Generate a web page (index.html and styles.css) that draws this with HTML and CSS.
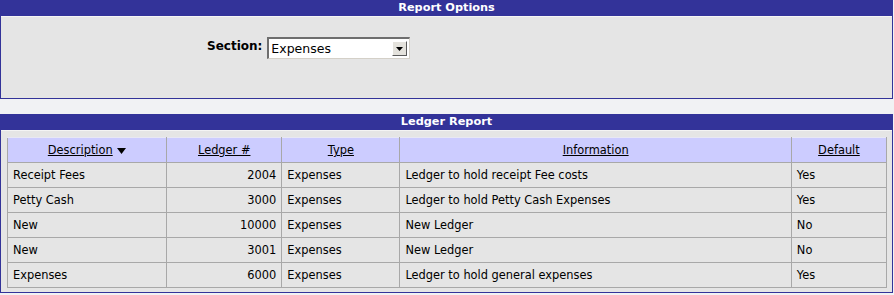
FILE: index.html
```html
<!DOCTYPE html>
<html>
<head>
<meta charset="utf-8">
<link rel="stylesheet" href="styles.css">
</head>
<body>
<div class="panel">
  <div class="panel-head">Report Options</div>
  <div class="panel-body options">
    <label class="field-label">Section:</label>
    <div class="select">
      <span class="select-value">Expenses</span>
      <span class="select-btn"><svg width="7" height="4" viewBox="0 0 7 4"><path d="M0 0H7L3.5 4Z" fill="#000"/></svg></span>
    </div>
  </div>
</div>
<div class="panel second">
  <div class="panel-head">Ledger Report</div>
  <div class="panel-body report">
    <table class="ledger">
      <thead>
        <tr>
          <th class="c-desc"><a href="#">Description</a> <svg class="sort" width="9" height="6" viewBox="0 0 9 6"><path d="M0 0H9L4.5 6Z" fill="#000"/></svg></th>
          <th class="c-num"><a href="#">Ledger #</a></th>
          <th class="c-type"><a href="#">Type</a></th>
          <th class="c-info"><a href="#">Information</a></th>
          <th class="c-def"><a href="#">Default</a></th>
        </tr>
      </thead>
      <tbody>
        <tr><td>Receipt Fees</td><td class="num">2004</td><td>Expenses</td><td>Ledger to hold receipt Fee costs</td><td>Yes</td></tr>
        <tr><td>Petty Cash</td><td class="num">3000</td><td>Expenses</td><td>Ledger to hold Petty Cash Expenses</td><td>Yes</td></tr>
        <tr><td>New</td><td class="num">10000</td><td>Expenses</td><td>New Ledger</td><td>No</td></tr>
        <tr><td>New</td><td class="num">3001</td><td>Expenses</td><td>New Ledger</td><td>No</td></tr>
        <tr><td>Expenses</td><td class="num">6000</td><td>Expenses</td><td>Ledger to hold general expenses</td><td>Yes</td></tr>
      </tbody>
    </table>
  </div>
</div>
</body>
</html>
```
FILE: styles.css
```css
html, body {
  margin: 0;
  padding: 0;
  background: #f1f2f4;
}
body {
  width: 894px;
  font-family: "DejaVu Sans", Verdana, sans-serif;
  font-size: 11.4px;
  color: #000;
}
.panel {
  width: 893px;
}
.second {
  margin-top: 15px;
}
.panel-head {
  background: #333399;
  color: #fff;
  font-weight: bold;
  text-align: center;
  height: 16px;
  line-height: 16px;
  font-size: 11.3px;
}
.panel-body {
  background: #e5e5e5;
  border: 1px solid #333399;
  border-top: none;
  box-shadow: inset 0 1px 0 #f4f4f4;
}
.options {
  box-sizing: border-box;
  height: 83px;
  display: flex;
  align-items: flex-start;
  padding: 21px 0 0 206px;
  gap: 5px;
}
.field-label {
  font-weight: bold;
  font-size: 12px;
  line-height: 18px;
  margin-top: 0;
}
.select {
  width: 143px;
  height: 22px;
  box-sizing: border-box;
  background: #fff;
  border-top: 2px solid #6e6e6e;
  border-left: 2px solid #6e6e6e;
  border-right: 1px solid #d4d0c8;
  border-bottom: 1px solid #d4d0c8;
  display: flex;
  align-items: center;
  justify-content: space-between;
}
.select-value {
  font-size: 12.5px;
  padding-left: 2px;
}
.select-btn {
  width: 15px;
  height: 15px;
  box-sizing: border-box;
  margin-right: 2px;
  background: #e4e2dc;
  border-top: 1px solid #fff;
  border-left: 1px solid #fff;
  border-right: 1px solid #5a5a5a;
  border-bottom: 1px solid #5a5a5a;
  display: flex;
  align-items: center;
  justify-content: center;
}
.report {
  padding: 7px 5px 4px 6px;
}
.ledger {
  width: 880px;
  border-collapse: collapse;
  border: 1px solid #a8a8a8;
}
.ledger th, .ledger td {
  border: 1px solid #a8a8a8;
  height: 24px;
  padding: 0 5px;
  font-weight: normal;
  white-space: nowrap;
}
.ledger th {
  background: #ccccff;
  text-align: center;
  border-color: #e8e8f4 #a8a8a8 #a8a8a8 #a8a8a8;
}
.ledger th a {
  color: #000;
  text-decoration: underline;
}
.ledger td {
  background: #e5e5e5;
}
.ledger td.num {
  text-align: right;
}
.sort {
  vertical-align: middle;
  margin-left: 1px;
}
.c-desc { width: 148px; }
.c-num { width: 104px; }
.c-type { width: 107px; }
.c-info { width: 380px; }
.c-def { width: 84px; }
```
